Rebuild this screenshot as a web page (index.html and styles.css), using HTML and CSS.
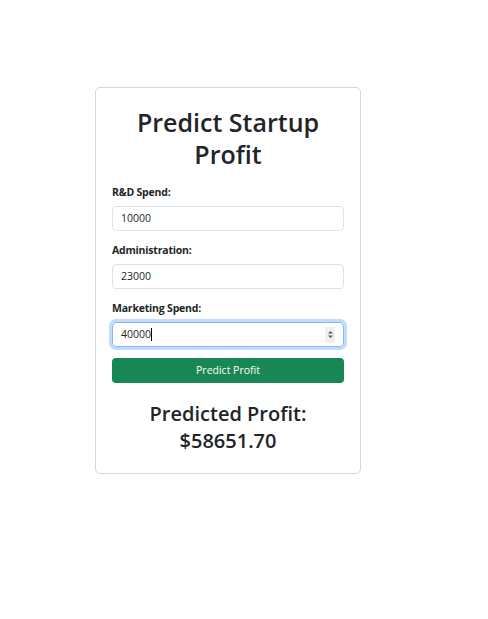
FILE: index.html
```html
<!DOCTYPE html>
<html>
<head>
<meta charset="utf-8">
<link rel="stylesheet" href="styles.css">
</head>
<body>
<div class="card">
  <h2 class="title">Predict Startup Profit</h2>
  <form class="form">
    <div class="field">
      <label class="label">R&amp;D Spend:</label>
      <div class="input">10000</div>
    </div>
    <div class="field">
      <label class="label">Administration:</label>
      <div class="input">23000</div>
    </div>
    <div class="field">
      <label class="label">Marketing Spend:</label>
      <div class="input focused"><span class="val">40000</span><span class="caret"></span><span class="spin"><svg width="7" height="11" viewBox="0 0 7 11"><path d="M1 4.5 L3.5 2 L6 4.5 Z M1 6.5 L3.5 9 L6 6.5 Z" fill="#555"/></svg></span></div>
    </div>
    <div class="btn">Predict Profit</div>
  </form>
  <h4 class="result">Predicted Profit: $58651.70</h4>
</div>
</body>
</html>
```
FILE: styles.css
```css
html, body {
  margin: 0;
  padding: 0;
  background: #fff;
}
body {
  font-family: "Open Sans", "Noto Sans", sans-serif;
  color: #212529;
  padding-top: 87px;
  padding-left: 95px;
}
.card {
  border: 1px solid #d6d8db;
  border-radius: 5px;
  padding: 16px 16px 19px 16px;
  box-sizing: border-box;
  width: 266px;
}
.title {
  margin: 0 0 14px 0;
  font-size: 25px;
  line-height: 32px;
  font-weight: 600;
  text-align: center;
  padding-top: 2px;
}
.form {
  display: flex;
  flex-direction: column;
}
.field {
  display: flex;
  flex-direction: column;
  margin-bottom: 11px;
}
.label {
  font-size: 10.5px;
  font-weight: 700;
  line-height: 16px;
  margin-bottom: 6px;
  letter-spacing: -0.2px;
}
.input {
  height: 25px;
  box-sizing: border-box;
  border: 1px solid #dee2e6;
  border-radius: 4px;
  font-size: 10.5px;
  line-height: 23px;
  padding: 0 8px;
  display: flex;
  align-items: center;
}
.focused {
  border-color: #86b7fe;
  box-shadow: 0 0 0 3px rgba(13, 110, 253, 0.25);
}
.caret {
  width: 1px;
  height: 13px;
  background: #000;
}
.spin {
  margin-left: auto;
  width: 10px;
  height: 16px;
  background: #f0f0f0;
  display: flex;
  align-items: center;
  justify-content: center;
}
.btn {
  height: 25px;
  background: #198754;
  color: #fff;
  border-radius: 4px;
  font-size: 10.5px;
  line-height: 25px;
  text-align: center;
}
.result {
  margin: 17px 0 0 0;
  font-size: 20px;
  line-height: 27px;
  font-weight: 600;
  text-align: center;
  padding: 0 20px;
}
```
